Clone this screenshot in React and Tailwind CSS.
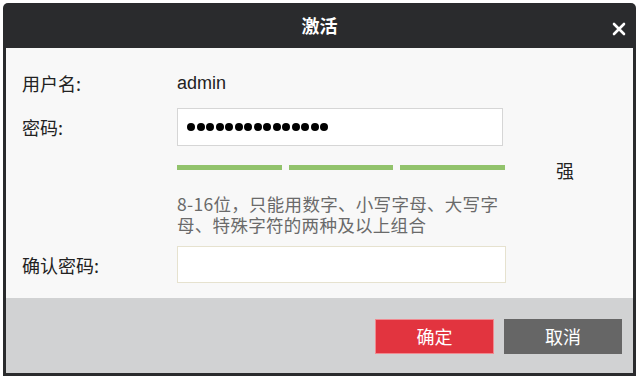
import React from "react";

const font = { fontFamily: '"Noto Sans CJK SC", "Noto Sans", sans-serif' };

function Label({ children }) {
  return <div className="w-[155px] shrink-0 text-[18px] leading-[24px] text-[#222]">{children}</div>;
}

export default function App() {
  const dots = Array.from({ length: 15 });

  return (
    <div className="w-[640px] h-[378px] bg-white pt-[3px] pl-[3px] pr-[4px] pb-[2px]" style={font}>
      <div className="h-full flex flex-col bg-[#2a2b2d] rounded-t-[5px] px-[3px] pb-[3px]">
        <div className="h-[45px] shrink-0 relative flex items-center justify-center">
          <span className="text-white text-[18px] font-bold">激活</span>
          <svg className="absolute right-[7px] top-[19px]" width="14" height="14" viewBox="0 0 14 14">
            <path d="M2 2 L12 12 M12 2 L2 12" stroke="white" strokeWidth="2.6" strokeLinecap="round" />
          </svg>
        </div>

        <div className="flex-1 bg-[#f8f8f8] pl-[16px] pt-[23px]">
          <div className="flex items-center">
            <Label>用户名:</Label>
            <span className="text-[18px] leading-[24px] text-[#222]" style={{ fontFamily: '"Liberation Sans", "Noto Sans CJK SC", sans-serif' }}>admin</span>
          </div>

          <div className="flex items-center mt-[13px]">
            <Label>密码:</Label>
            <div className="w-[326px] h-[38px] bg-white border border-[#d6d6d6] flex items-center pl-[9px] gap-[1.5px]">
              {dots.map((_, i) => (
                <span key={i} className="w-[8px] h-[8px] rounded-full bg-black" />
              ))}
            </div>
          </div>

          <div className="flex items-center h-[24px] mt-[12px] pl-[155px]">
            <div className="flex gap-[7px] -mt-[5px]">
              <span className="w-[105px] h-[5px] bg-[#92c36c]" />
              <span className="w-[104px] h-[5px] bg-[#92c36c]" />
              <span className="w-[105px] h-[5px] bg-[#92c36c]" />
            </div>
            <span className="ml-[51px] text-[18px] text-[#222]">强</span>
          </div>

          <div className="pl-[155px] mt-[11px] text-[17.5px] leading-[21px] tracking-[0.3px] text-[#6a6a6a] w-[520px]">
            <p>8-16位，只能用数字、小写字母、大写字</p>
            <p>母、特殊字符的两种及以上组合</p>
          </div>

          <div className="flex items-center mt-[11px]">
            <Label>确认密码:</Label>
            <div className="w-[329px] h-[37px] bg-white border border-[#e6e2cf]" />
          </div>
        </div>

        <div className="h-[75px] shrink-0 bg-[#d1d2d3] flex items-center justify-end gap-[10px] pr-[11px] pt-[2px]">
          <button className="w-[119px] h-[35px] bg-[#e2343f] border border-[#f08a90] text-white text-[18px]">确定</button>
          <button className="w-[118px] h-[35px] bg-[#666666] text-white text-[18px]">取消</button>
        </div>
      </div>
    </div>
  );
}
